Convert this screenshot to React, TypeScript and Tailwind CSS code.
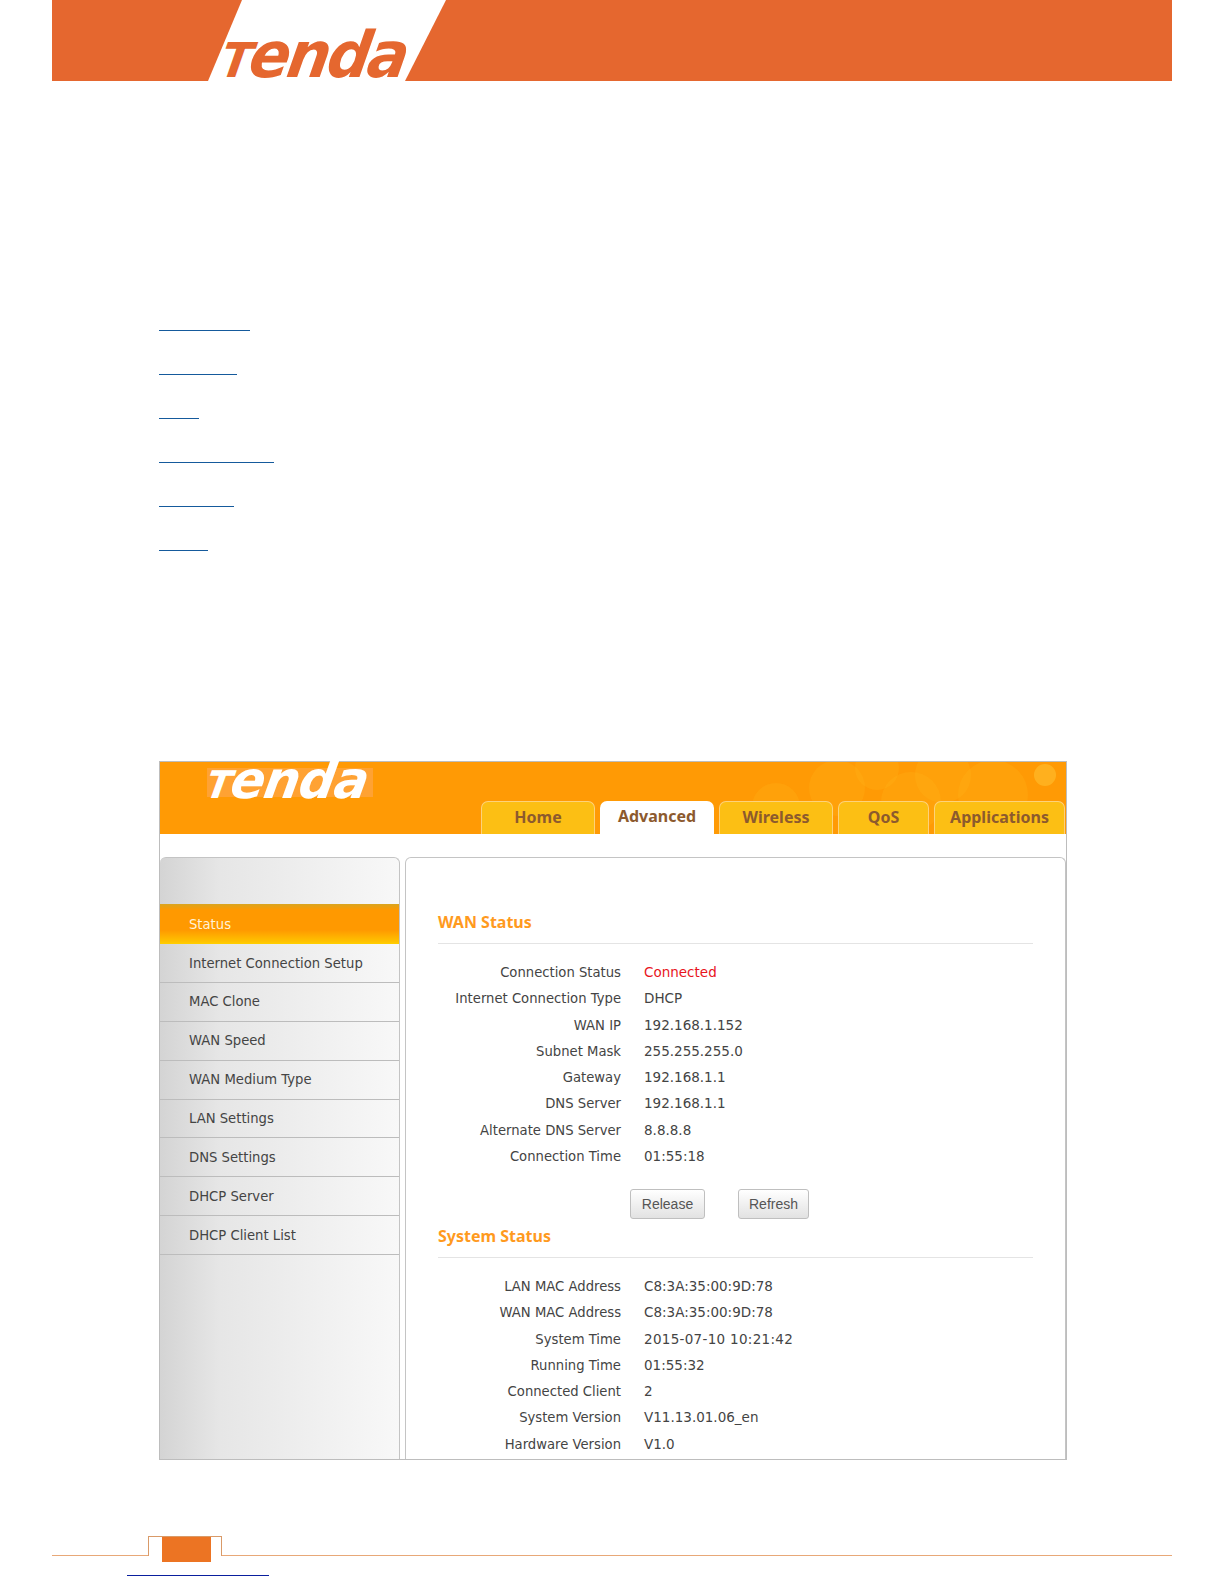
const sans = "font-['DejaVu_Sans',sans-serif]";

const links = [91, 78, 40, 115, 75, 49];
const tabs = [
  { label: "Home", w: "w-[114px]", active: false },
  { label: "Advanced", w: "w-[114px]", active: true },
  { label: "Wireless", w: "w-[114px]", active: false },
  { label: "QoS", w: "w-[91px]", active: false },
  { label: "Applications", w: "w-[131px]", active: false },
];
const menu = [
  "Status",
  "Internet Connection Setup",
  "MAC Clone",
  "WAN Speed",
  "WAN Medium Type",
  "LAN Settings",
  "DNS Settings",
  "DHCP Server",
  "DHCP Client List",
];
const wan: [string, string][] = [
  ["Connection Status", "Connected"],
  ["Internet Connection Type", "DHCP"],
  ["WAN IP", "192.168.1.152"],
  ["Subnet Mask", "255.255.255.0"],
  ["Gateway", "192.168.1.1"],
  ["DNS Server", "192.168.1.1"],
  ["Alternate DNS Server", "8.8.8.8"],
  ["Connection Time", "01:55:18"],
];
const sys: [string, string][] = [
  ["LAN MAC Address", "C8:3A:35:00:9D:78"],
  ["WAN MAC Address", "C8:3A:35:00:9D:78"],
  ["System Time", "2015-07-10 10:21:42"],
  ["Running Time", "01:55:32"],
  ["Connected Client", "2"],
  ["System Version", "V11.13.01.06_en"],
  ["Hardware Version", "V1.0"],
];

function Rows({ rows }: { rows: [string, string][] }) {
  return (
    <div className="flex flex-col">
      {rows.map(([k, v]) => (
        <div key={k} className="flex h-[26.27px] items-baseline leading-[26px] text-[#444]">
          <span className="w-[183px] text-right text-[13.2px] whitespace-nowrap">{k}</span>
          <span
            className={`ml-[23px] text-[13.5px] whitespace-nowrap ${v === "Connected" ? "text-[#e8141c]" : ""} ${
              v.startsWith("2015") ? "tracking-[0.3px]" : ""
            }`}
          >
            {v}
          </span>
        </div>
      ))}
    </div>
  );
}

function Heading({ text, h }: { text: string; h: string }) {
  return (
    <div className={`flex ${h} w-[595px] items-end border-b border-[#e4e4e4] pb-[12px]`}>
      <span className="font-['Noto_Sans',sans-serif] text-[16px] leading-[18px] font-bold text-[#ff9a1e]">{text}</span>
    </div>
  );
}

export default function App() {
  return (
    <div className={`h-[1584px] w-[1224px] overflow-hidden bg-white ${sans}`}>
      <header className="relative ml-[52px] h-[81px] w-[1120px]">
        <svg viewBox="0 0 1120 81" className="block h-[81px] w-[1120px]">
          <rect width="1120" height="81" fill="#e5672f" />
          <polygon points="190,0 394,0 353,81 156,81" fill="#ffffff" />
        </svg>
        <span className="absolute top-[17px] left-[170px] origin-left scale-x-[0.94] -skew-x-[10deg] text-[64px] leading-[76px] font-bold tracking-[-3px] text-[#e5672f] italic">
          <span className="text-[48px]">T</span>enda
        </span>
      </header>

      <div className="mt-[249px] ml-[159px] flex flex-col gap-[43px]">
        {links.map((w, i) => (
          <div key={i} className="h-px bg-[#155a9c]" style={{ width: w }} />
        ))}
      </div>

      <main className="mt-[210px] ml-[159px] flex h-[699px] w-[908px] flex-col border border-[#bdbdbd]">
        <div className="relative flex h-[72px] shrink-0 items-end justify-end bg-[#ff9a05]">
          <svg viewBox="0 0 420 72" className="absolute top-0 right-0 h-[72px] w-[420px]">
            <g fill="#ffb61a" fillOpacity="0.25">
              <circle cx="191" cy="26" r="28" />
              <circle cx="231" cy="6" r="22" />
              <circle cx="297" cy="13" r="28" />
              <circle cx="347" cy="33" r="35" />
              <circle cx="265" cy="40" r="30" />
              <circle cx="130" cy="45" r="24" />
            </g>
            <circle cx="399" cy="13" r="11" fill="#ffc233" fillOpacity="0.55" />
          </svg>
          <div className="absolute top-[6px] left-[47px] flex h-[29px] w-[166px] items-center bg-[#ffa233]">
            <span className="origin-left scale-x-[0.97] -skew-x-[10deg] text-[52px] leading-[29px] font-bold tracking-[-1px] text-white italic">
              <span className="text-[38px]">T</span>enda
            </span>
          </div>
          <nav className="relative mr-[1px] flex gap-[5px] font-['Noto_Sans',sans-serif]">
            {tabs.map((t) => (
              <div
                key={t.label}
                className={`flex h-[33px] items-center justify-center rounded-t-[7px] pb-[3px] text-[16px] font-bold text-[#8c5a2e] ${t.w} ${
                  t.active ? "bg-white" : "border border-b-0 border-[#fdd27a] bg-[#fcbf14]"
                }`}
              >
                {t.label}
              </div>
            ))}
          </nav>
        </div>

        <div className="mt-[23px] flex min-h-0 flex-1 gap-[5px]">
          <aside className="flex w-[240px] flex-col rounded-t-[6px] border-t border-r border-[#c4c4c4] bg-gradient-to-r from-[#d4d4d4] via-[#e6e6e6] via-25% to-[#f8f8f8] pt-[46px]">
            {menu.map((m, i) =>
              i === 0 ? (
                <div
                  key={m}
                  className="flex h-[40px] items-center bg-[linear-gradient(180deg,#d9a520_0%,#ff9900_15%,#ff9900_65%,#ffc400_95%,#ffd000_100%)] pt-px pl-[29px] text-[13.2px] text-[#fff2d8]"
                >
                  {m}
                </div>
              ) : (
                <div
                  key={m}
                  className="flex h-[38.9px] items-center border-b border-[#bcbcbc] pt-px pl-[29px] text-[13.2px] text-[#444]"
                >
                  {m}
                </div>
              ),
            )}
          </aside>

          <section className="flex-1 rounded-t-[6px] border-x border-t border-[#c4c4c4] pl-[32px]">
            <Heading text="WAN Status" h="h-[86px]" />
            <div className="mt-[15px]">
              <Rows rows={wan} />
            </div>
            <div className="mt-[20px] ml-[192px] flex gap-[33px] font-['Liberation_Sans',sans-serif] text-[14px] text-[#555]">
              <div className="flex h-[30px] w-[75px] items-center justify-center rounded-[3px] border border-[#bfbfbf] bg-gradient-to-b from-white to-[#e2e2e2]">
                Release
              </div>
              <div className="flex h-[30px] w-[71px] items-center justify-center rounded-[3px] border border-[#bfbfbf] bg-gradient-to-b from-white to-[#e2e2e2]">
                Refresh
              </div>
            </div>
            <Heading text="System Status" h="h-[39px]" />
            <div className="mt-[15px]">
              <Rows rows={sys} />
            </div>
          </section>
        </div>
      </main>

      <footer className="mt-[76px] ml-[52px] w-[1120px]">
        <div className="flex h-[20px] items-end">
          <div className="h-px w-[96px] bg-[#e8a878]" />
          <div className="relative h-[20px] w-[74px] border-x border-t border-[#d99a68]">
            <div className="absolute top-0 left-[13px] h-[25px] w-[49px] bg-[#ec7423]" />
          </div>
          <div className="h-px flex-1 bg-[#e8a878]" />
        </div>
        <div className="mt-[19px] ml-[75px] h-px w-[142px] bg-[#0a1f9e]" />
      </footer>
    </div>
  );
}
